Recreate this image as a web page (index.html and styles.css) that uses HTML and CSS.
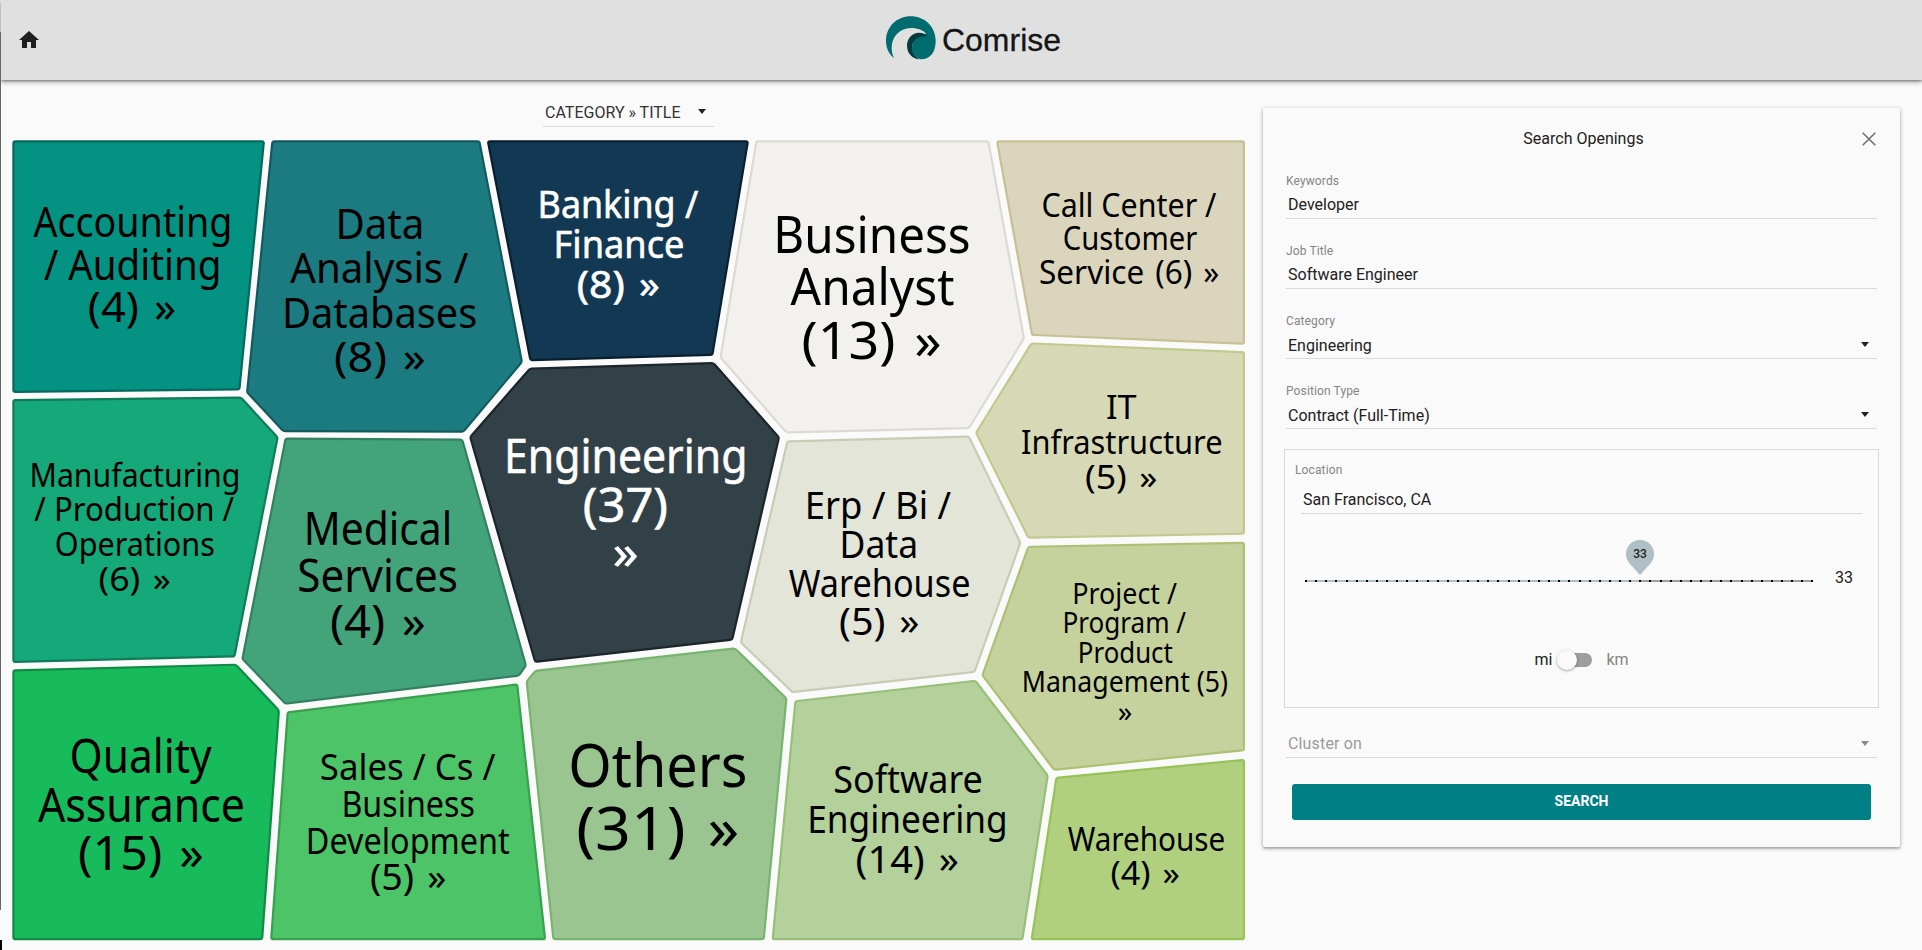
FILE: index.html
```html
<!DOCTYPE html>
<html lang="en">
<head>
<meta charset="utf-8">
<title>Comrise</title>
<link rel="stylesheet" href="styles.css">
</head>
<body>
<div class="edge"></div>
<header class="topbar">
  <a class="home" aria-label="Home">
    <svg width="24" height="24" viewBox="0 0 24 24"><path fill="#1f1f1f" d="M10 20v-6h4v6h5v-8h3L12 3 2 12h3v8z"/></svg>
  </a>
  <div class="logo">
    <svg class="logo-mark" width="50" height="44" viewBox="48 47 150 132">
      <path fill="#016c70" d="M72 174C56 160 48 142 48 122C48 80 80 48 122 48C165 48 197 80 197 122C197 154 182 177 152 177C128 172 122 150 128 130C134 112 150 106 168 100C160 90 145 83 122 83C88 84 65 110 65 142C65 154 68 165 72 174Z"/>
      <path fill="#033c3f" d="M172 108C165 99 156 97 148 97C126 97 111 114 111 136C111 158 126 175 148 177C134 170 126 156 126 142C126 120 146 104 172 108Z"/>
    </svg>
    <svg class="logo-name" width="120" height="44" viewBox="0 0 120 44"><text x="0" y="35" textLength="119" lengthAdjust="spacingAndGlyphs">Comrise</text></svg>
  </div>
</header>
<main class="content">
  <section class="chart">
    <div class="grouping"><span>CATEGORY » TITLE</span><i class="arrow"></i></div>
    <svg class="cells" id="cells" width="1236" height="802" viewBox="10.6 138.6 1236 802"></svg>
  </section>
  <aside class="panel">
    <div class="panel-head"><h1>Search Openings</h1>
      <svg class="close" width="14" height="14" viewBox="0 0 14 14"><path d="M.7.7l12.6 12.6M13.3.7L.7 13.3" stroke="#6c6c6c" stroke-width="1.5"/></svg>
    </div>
    <div class="field"><label>Keywords</label><div class="value">Developer</div></div>
    <div class="field"><label>Job Title</label><div class="value">Software Engineer</div></div>
    <div class="field select"><label>Category</label><div class="value"><span>Engineering</span><i class="arrow"></i></div></div>
    <div class="field select"><label>Position Type</label><div class="value"><span>Contract (Full-Time)</span><i class="arrow"></i></div></div>
    <div class="location">
      <label>Location</label>
      <div class="value place">San Francisco, CA</div>
      <div class="distance">
        <div class="track"><div class="track-fill"></div><div class="ticks"></div>
          <div class="pin"><svg width="28" height="35" viewBox="0 0 28 35"><path fill="#b0bec5" d="M14 35L4 24C1.500 21.200 0 18 0 14a14 14 0 0 1 28 0c0 4-1.500 7.200-4 10z"/></svg><b>33</b></div>
        </div>
        <span class="amount">33</span>
      </div>
      <div class="units"><span>mi</span><div class="switch"><div class="thumb"></div></div><span class="off">km</span></div>
    </div>
    <div class="cluster"><span>Cluster on</span><i class="arrow"></i></div>
    <button class="search">SEARCH</button>
  </aside>
</main>
<script src="cells.js"></script>
</body>
</html>
```
FILE: styles.css
```css
* { box-sizing: border-box; }
body { margin: 0; height: 950px; overflow: hidden; background: #fafafa; color: #212121; font: 16px/20px Roboto, sans-serif; }
.edge { position: absolute; z-index: 3; left: 0; top: 32px; width: 1px; height: 878px; background: #666; }
.edge::after { content: ""; position: absolute; left: 0; top: 908px; width: 2px; height: 10px; background: #000; }
.topbar { position: relative; height: 80px; margin-left: 1px; background: #e0e0e0; box-shadow: 0 1px 2px rgba(0,0,0,.3), 0 2px 5px rgba(0,0,0,.36); display: flex; align-items: center; justify-content: center; }
.home { position: absolute; left: 16px; top: 28px; height: 24px; }
.logo { display: flex; align-items: flex-start; gap: 6px; height: 48px; margin-left: 25px; }
.logo-name text { font: 32px "Liberation Sans", sans-serif; fill: #151515; stroke: #151515; stroke-width: .3; }
.content { display: flex; align-items: flex-start; }
.chart { width: 1247px; padding: 20px 0 0 11px; }
.grouping { width: 171px; height: 27px; margin: 0 0 12px 532px; padding: 0 8px 1px 2px; display: flex; align-items: center; justify-content: space-between; border-bottom: 1px solid #d9d9d9; color: #333; line-height: 22px; white-space: nowrap; }
.grouping .arrow { margin-bottom: 2px; }
.arrow { width: 0; height: 0; border: 4.500px solid transparent; border-top: 5px solid #222; border-bottom: 0; }
.cells { display: block; }
.cells path { stroke-width: 2.2; stroke-linejoin: round; }
.cells text { font-family: "Noto Sans", sans-serif; }
.panel { width: 637px; height: 739px; margin: 28px 0 0 16px; padding: 0 23px; border-radius: 2px; box-shadow: 0 1px 4px rgba(0,0,0,.3), 0 2px 2px rgba(0,0,0,.16); }
.panel-head { height: 63px; padding-top: 21px; position: relative; text-align: center; }
.panel-head h1 { margin: 0 0 0 4px; font-size: 16px; line-height: 20px; font-weight: 400; }
.close { position: absolute; right: 1px; top: 24px; }
label { display: block; font-size: 12px; line-height: 14px; letter-spacing: .01em; color: #858585; }
.field { height: 70px; padding-top: 3px; }
.field .value { height: 31px; padding: 7px 8px 0 2px; border-bottom: 1px solid #d9d9d9; }
.field.select .value { display: flex; padding-top: 8px; justify-content: space-between; }
.field .arrow { margin-top: 6px; }
.location { width: 595px; height: 259px; margin: -2px 0 0 -2px; padding: 13px 16px 0; border: 1px solid #d9d9d9; }
.location label { margin-left: -6px; }
.place { width: 561px; height: 37px; padding: 13px 2px 0; border-bottom: 1px solid #d9d9d9; }
.distance { display: flex; align-items: center; margin: 54px 0 0 4px; height: 22px; }
.track { position: relative; width: 508px; height: 2px; margin-top: 3px; background: #9e9e9e; }
.track-fill { width: 336px; height: 2px; background: #b0bec5; }
.ticks { height: 2px; margin-top: -2px; background: repeating-linear-gradient(90deg, #000 0 2px, transparent 2px 10.130px); }
.pin { position: absolute; left: 321px; top: -40px; width: 28px; height: 35px; }
.pin svg { display: block; }
.pin b { position: absolute; left: 0; top: 4px; width: 28px; text-align: center; font-size: 12px; line-height: 20px; font-weight: 500; }
.amount { margin: -2px 0 0 22px; }
.units { display: flex; align-items: center; height: 20px; margin: 60px 0 0 233.500px; }
.units .off { color: #858585; }
.switch { width: 34px; height: 14px; margin: 0 14px 0 6px; border-radius: 7px; background: #9e9e9e; }
.thumb { width: 20px; height: 20px; margin: -3px 0 0 -1px; border-radius: 50%; background: #fafafa; box-shadow: 0 1px 3px rgba(0,0,0,.35); }
.cluster { height: 31px; margin: 19px 0 26px; padding: 7px 8px 0 2px; display: flex; justify-content: space-between; border-bottom: 1px solid #d9d9d9; color: #9b9b9b; letter-spacing: .01em; }
.cluster .arrow { margin-top: 7px; border-top-color: #8c8c8c; }
.search { display: block; width: 579px; height: 36px; margin-left: 6px; padding: 0 0 2px; border: 0; border-radius: 3px; background: #008085; color: #fff; font: 700 14px/34px Roboto, sans-serif; }
```
FILE: cells.js
```js
// Each cell: fill, stroke, text colour, font size, outline, lines [text, left, right, baseline]
const cells = [
  ["#049283","#07685d","#000",41.3,"13,141 263.5,141 239,389 13,391.5",[["Accounting",33,228.8,237],["/ Auditing",43.5,217.8,280],["(4) »",88.5,174.8,322]]],
  ["#1b7b80","#135a5e","#000",42.8,"272,141 479,141 521.5,361.5 463,431.3 283,430.7 246.7,392",[["Data",338.8,421.2,238.7],["Analysis /",289.8,468.2,283],["Databases",285.3,475.5,328],["(8) »",334.7,424.5,371.7]]],
  ["#123854","#0a1f2e","#fff",38.5,"487.5,141 747.5,141 712,354.5 530,359.7",[["Banking /",540,697.6,218],["Finance",556,682.4,257.7],["(8) »",577.5,658.8,297.7]]],
  ["#f2f1ed","#dcdad0","#000",51.5,"756,141 988,141 1023.5,338 968.5,427.7 786,432 720.2,357",[["Business",777.6,968.6,252.3],["Analyst",790.2,953.5,305],["(13) »",803.3,940,358.7]]],
  ["#dad5bc","#c6c092","#000",32.4,"996.7,141 1243.5,141 1243.5,343.3 1031.7,334.5",[["Call Center /",1042,1216,216.7],["Customer",1063.3,1196.7,249.7],["Service (6) »",1039.6,1218.4,283.7]]],
  ["#d7d9b6","#c2c98d","#000",33.6,"1031,343 1243.5,351.8 1243.5,533.3 1028,537.3 975.7,432.3",[["IT",1106.6,1136.6,419],["Infrastructure",1021.6,1221.3,453.7],["(5) »",1085.6,1156,488.7]]],
  ["#c6d29e","#adc074","#000",28.4,"1028,546.4 1243.5,542.4 1243.5,749.8 1053.7,769.4 982,674.8",[["Project /",1073.8,1177,603.7],["Program /",1063.9,1186,633],["Product",1079.3,1172.2,662.7],["Management (5)",1023.2,1227.2,692],["»",1118.4,1131.5,721.5]]],
  ["#b0d080","#96c355","#000",32.9,"1056,777.5 1243.5,759.5 1243.5,938.8 1031.3,938.8",[["Warehouse",1067.3,1223.5,850.7],["(4) »",1111.2,1178.8,885]]],
  ["#b4d19b","#97bf77","#000",38.6,"795,700.8 975,680.4 1047.3,775.2 1022,938.8 772.3,938.8",[["Software",833.7,980.8,792.7],["Engineering",809.5,1004.9,832.7],["(14) »",856.2,957.8,872.7]]],
  ["#9ac591","#78b46f","#000",60.8,"535,670.5 734.5,648 786,698 763.3,938.8 553,938.8 526.3,681",[["Others",570.6,745.2,787],["(31) »",578,736.9,850]]],
  ["#e3e5d9","#c9ccb4","#000",37.5,"787,441 968.5,436.2 1020,542.3 974,671.5 792,691.7 740.4,642",[["Erp / Bi /",807.3,950.8,518.7],["Data",842,914.8,557.7],["Warehouse",788.3,969,596.7],["(5) »",839.7,918,634.7]]],
  ["#324047","#1c252b","#fff",46.8,"529.5,368.3 713,362.7 778.6,437 731.8,639.3 534.8,661.5 469.8,436.7",[["Engineering",507.3,743.6,473],["(37)",583.5,666.5,521.7],["»",613.5,636.2,569]]],
  ["#43a47c","#328060","#000",44.8,"285.2,438.3 461.8,439.2 525.5,665 518.5,675.2 285,703.2 242,658.5",[["Medical",307,448.6,545],["Services",298.8,456.3,591.3],["(4) »",330.6,424.5,638]]],
  ["#15a878","#107b58","#000",33.4,"13,399.7 240.5,397.2 277.2,437 234,656 13,661.5",[["Manufacturing",31.8,237.6,486.7],["/ Production /",33.9,234.3,521],["Operations",56.3,213.5,555.3],["(6) »",99.2,169.4,590.3]]],
  ["#18bb5b","#128a45","#000",47,"13,670 235.5,664.3 278.5,710 261.7,938.8 13,938.8",[["Quality",71,211.3,772.3],["Assurance",37.5,243.2,821.3],["(15) »",78.7,202.4,870]]],
  ["#4dc467","#38a04f","#000",35.6,"287.3,712 516.8,684 544.7,938.8 270.8,938.8",[["Sales / Cs /",320.4,494.7,779.3],["Business",343.7,473.5,816.7],["Development",308.2,509.4,853.7],["(5) »",370.6,444.9,889.3]]]
];

// Closed outline with slightly rounded corners
function outline(str) {
  const p = str.split(" ").map(s => s.split(",").map(Number));
  let d = "";
  p.forEach((c, i) => {
    const toward = q => {
      const l = Math.hypot(q[0] - c[0], q[1] - c[1]);
      return [c[0] + (q[0] - c[0]) * 2 / l, c[1] + (q[1] - c[1]) * 2 / l];
    };
    const a = toward(p[(i + p.length - 1) % p.length]), b = toward(p[(i + 1) % p.length]);
    d += `${i ? "L" : "M"}${a}Q${c} ${b}`;
  });
  return d + "Z";
}

const ctx = document.createElement("canvas").getContext("2d");
let out = "";
for (const [fill, stroke, ink, size, pts, lines] of cells) {
  out += `<path d="${outline(pts)}" fill="${fill}" stroke="${stroke}"/>`;
  ctx.font = `${size}px "Noto Sans"`;
  const halo = ink === "#fff" ? ' stroke="#fff" stroke-width=".6"' : "";
  for (const [t, l, r, y] of lines) {
    // wider gap between a count and its chevron
    const gap = t.includes(" »") ? size * .09 : 0;
    ctx.wordSpacing = gap + "px";
    const m = ctx.measureText(t);
    const k = (r - l) / (m.actualBoundingBoxRight + m.actualBoundingBoxLeft);
    const x = l + m.actualBoundingBoxLeft * k;
    out += `<text x="${x}" y="${y}" font-size="${size}" fill="${ink}"${halo} word-spacing="${gap}" textLength="${m.width * k}" lengthAdjust="spacingAndGlyphs">${t}</text>`;
  }
}
document.getElementById("cells").innerHTML = out;
```
